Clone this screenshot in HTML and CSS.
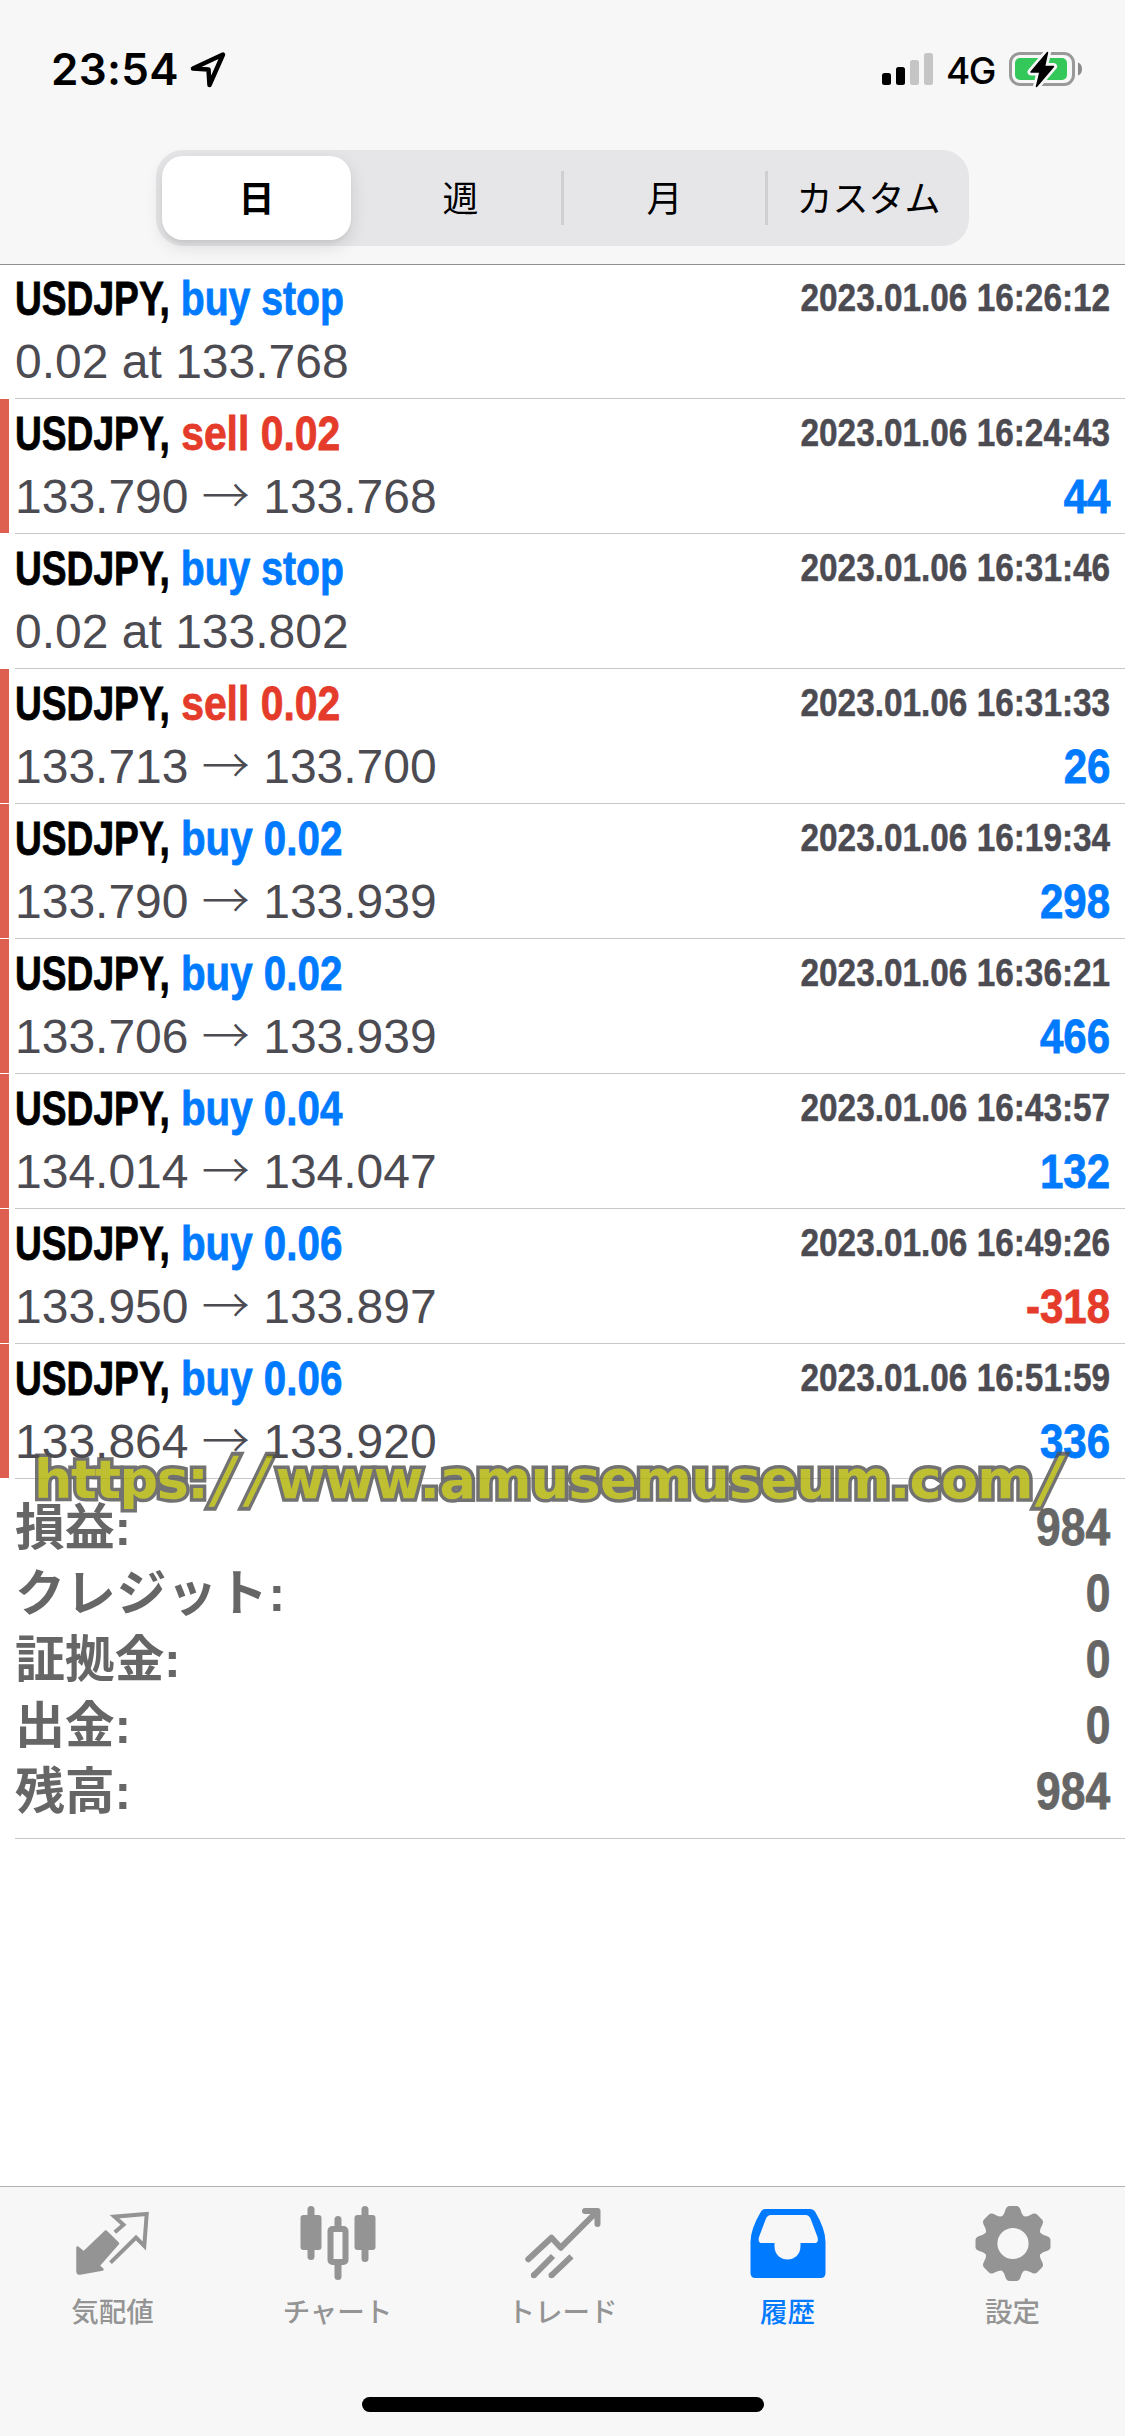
FILE: index.html
```html
<!DOCTYPE html>
<html lang="ja">
<head>
<meta charset="utf-8">
<title>履歴</title>
<link rel="stylesheet" href="styles.css">
</head>
<body>
<div class="screen">
  <header class="top">
    <div class="status">
      <span class="clock">23:54</span>
      <svg class="location" width="40" height="40" viewBox="0 0 40 40"><path d="M35 5.500 5 19.500 20.500 20.500 21.500 36Z" fill="none" stroke="#000" stroke-width="4.500" stroke-linejoin="round"/></svg>
      <svg class="signal" width="51" height="32" viewBox="0 0 51 32"><rect x="0" y="20" width="9" height="12" rx="2.500"/><rect x="14" y="14" width="9" height="18" rx="2.500"/><g fill="#c5c5c5"><rect x="28" y="7" width="9" height="25" rx="2.500"/><rect x="42" y="0" width="9" height="32" rx="2.500"/></g></svg>
      <span class="network">4G</span>
      <svg class="battery" width="74" height="40" viewBox="0 0 74 40"><rect x="1.500" y="4.500" width="63" height="31" rx="9.500" fill="none" stroke="#999" stroke-width="3"/><rect x="6" y="9" width="52" height="22" rx="5" fill="#34c759"/><path d="M69 13.500Q73 15 73 20T69 26.500Z" fill="#8a8a8a"/><path d="M38.500 3.500 22 23H31L27.500 37.500 44.500 17.500H35.500Z" fill="#000" stroke="#f7f7f7" stroke-width="7" stroke-linejoin="round" paint-order="stroke"/><path d="M38.500 3.500 22 23H31L27.500 37.500 44.500 17.500H35.500Z" stroke="#000" stroke-width="1.500" stroke-linejoin="round"/></svg>
    </div>
    <nav class="segments">
      <span class="segment selected">日</span>
      <span class="segment after-selected">週</span>
      <span class="segment divided">月</span>
      <span class="segment divided">カスタム</span>
    </nav>
  </header>

  <main class="content">
    <ul class="deals">
      <li class="deal"><i class="bar none"></i><div class="body"><div class="line"><b class="title">USDJPY,<span class="side buy order"> buy stop</span></b><b class="time">2023.01.06 16:26:12</b></div><div class="line"><span class="price">0.02 at 133.768</span></div></div></li>
      <li class="deal"><i class="bar"></i><div class="body"><div class="line"><b class="title">USDJPY,<span class="side sell"> sell 0.02</span></b><b class="time">2023.01.06 16:24:43</b></div><div class="line"><span class="price">133.790 <span class="arrow">→</span> 133.768</span><b class="profit">44</b></div></div></li>
      <li class="deal"><i class="bar none"></i><div class="body"><div class="line"><b class="title">USDJPY,<span class="side buy order"> buy stop</span></b><b class="time">2023.01.06 16:31:46</b></div><div class="line"><span class="price">0.02 at 133.802</span></div></div></li>
      <li class="deal"><i class="bar"></i><div class="body"><div class="line"><b class="title">USDJPY,<span class="side sell"> sell 0.02</span></b><b class="time">2023.01.06 16:31:33</b></div><div class="line"><span class="price">133.713 <span class="arrow">→</span> 133.700</span><b class="profit">26</b></div></div></li>
      <li class="deal"><i class="bar"></i><div class="body"><div class="line"><b class="title">USDJPY,<span class="side buy"> buy 0.02</span></b><b class="time">2023.01.06 16:19:34</b></div><div class="line"><span class="price">133.790 <span class="arrow">→</span> 133.939</span><b class="profit">298</b></div></div></li>
      <li class="deal"><i class="bar"></i><div class="body"><div class="line"><b class="title">USDJPY,<span class="side buy"> buy 0.02</span></b><b class="time">2023.01.06 16:36:21</b></div><div class="line"><span class="price">133.706 <span class="arrow">→</span> 133.939</span><b class="profit">466</b></div></div></li>
      <li class="deal"><i class="bar"></i><div class="body"><div class="line"><b class="title">USDJPY,<span class="side buy"> buy 0.04</span></b><b class="time">2023.01.06 16:43:57</b></div><div class="line"><span class="price">134.014 <span class="arrow">→</span> 134.047</span><b class="profit">132</b></div></div></li>
      <li class="deal"><i class="bar"></i><div class="body"><div class="line"><b class="title">USDJPY,<span class="side buy"> buy 0.06</span></b><b class="time">2023.01.06 16:49:26</b></div><div class="line"><span class="price">133.950 <span class="arrow">→</span> 133.897</span><b class="profit loss">-318</b></div></div></li>
      <li class="deal"><i class="bar"></i><div class="body"><div class="line"><b class="title">USDJPY,<span class="side buy"> buy 0.06</span></b><b class="time">2023.01.06 16:51:59</b></div><div class="line"><span class="price">133.864 <span class="arrow">→</span> 133.920</span><b class="profit">336</b></div></div></li>
    </ul>
    <dl class="summary">
      <div class="total"><dt>損益:</dt><dd>984</dd></div>
      <div class="total"><dt class="kana">クレジット:</dt><dd>0</dd></div>
      <div class="total"><dt>証拠金:</dt><dd>0</dd></div>
      <div class="total"><dt>出金:</dt><dd>0</dd></div>
      <div class="total"><dt>残高:</dt><dd>984</dd></div>
    </dl>
    <div class="watermark"><span class="scheme">https:</span><span class="slash">/</span><span class="slash">/</span><span class="host">www.amusemuseum.com</span><span class="slash">/</span></div>
  </main>

  <footer class="bottom">
    <nav class="tabs">
      <a class="tab">
        <svg width="90" height="78" viewBox="0 0 90 78"><path d="M9.500 43.500 15.800 48.500 37.800 27.500 50 39.500 30.500 61.700 34.500 65.500 12 69.500Q9.500 69.800 9.500 67Z" fill="currentColor" stroke="currentColor" stroke-width="2.500" stroke-linejoin="round"/><path d="M46.800 28.300 55.500 20.700 46.500 12.700 78.700 10 76.300 42 68 33.500 42.500 58.700" fill="none" stroke="currentColor" stroke-width="4"/></svg>
        <span>気配値</span>
      </a>
      <a class="tab">
        <svg width="90" height="78" viewBox="0 0 90 78" fill="currentColor"><rect x="7.500" y="11" width="21" height="35" rx="3"/><rect x="14.500" y="2" width="7" height="54" rx="3.500"/><rect x="41.500" y="12" width="7" height="15" rx="3.500"/><rect x="41.500" y="56" width="7" height="20" rx="3.500"/><rect x="37.500" y="25" width="15" height="33" rx="2" fill="none" stroke="currentColor" stroke-width="6"/><rect x="61.500" y="11" width="21" height="35" rx="3"/><rect x="68.500" y="2" width="7" height="56" rx="3.500"/></svg>
        <span>チャート</span>
      </a>
      <a class="tab">
        <svg width="90" height="78" viewBox="0 0 90 78" fill="none" stroke="currentColor" stroke-width="6" stroke-linejoin="round"><path d="M10.300 55.300 33.500 33.700 42.800 43.700 78 8.500M67 7H79.500V20" stroke-linecap="round"/><path d="M15.800 71.300 35 52M33.500 71.300 53.500 52.300"/><path d="M15.800 71.300h.01M33.500 71.300h.01" stroke-linecap="round"/></svg>
        <span>トレード</span>
      </a>
      <a class="tab active">
        <svg width="90" height="78" viewBox="0 0 90 78"><path fill="currentColor" fill-rule="evenodd" d="M22.500 5H67.500Q70.500 5 72 7.500Q82.500 25 82.500 38V69Q82.500 74 77.500 74H12.500Q7.500 74 7.500 69V38Q7.500 25 18 7.500Q19.500 5 22.500 5ZM28 11Q24.500 11 23 14.500L16 33Q14.500 39 19 39H31.500V42C31.500 60 57.500 60 57.500 42V39H71.500Q76 39 74.500 33L67.500 14.500Q66 11 62.500 11Z"/></svg>
        <span>履歴</span>
      </a>
      <a class="tab">
        <svg width="90" height="78" viewBox="0 0 90 78"><g transform="translate(45 39.500)"><circle r="22.300" fill="none" stroke="currentColor" stroke-width="13.400"/><g fill="currentColor"><path id="tooth" d="M-13 -25.500Q-9 -28-7.800 -33Q-6.500 -37.500-3.500 -37.500H3.500Q6.500 -37.500 7.800 -33Q9 -28 13 -25.500L9 -22H-9Z"/><use href="#tooth" transform="rotate(45)"/><use href="#tooth" transform="rotate(90)"/><use href="#tooth" transform="rotate(135)"/><use href="#tooth" transform="rotate(180)"/><use href="#tooth" transform="rotate(225)"/><use href="#tooth" transform="rotate(270)"/><use href="#tooth" transform="rotate(315)"/></g></g></svg>
        <span>設定</span>
      </a>
    </nav>
    <div class="home"></div>
  </footer>
</div>
</body>
</html>
```
FILE: styles.css
```css
* { box-sizing: border-box; }

body {
  margin: 0;
  background: #fff;
  font-family: "Liberation Sans", "Noto Sans CJK JP", sans-serif;
}

.screen {
  display: flex;
  flex-direction: column;
  width: 1125px;
  height: 2436px;
}

/* header */
.top {
  height: 265px;
  background: #f7f7f7;
  border-bottom: 1px solid #8f8f8f;
}

.status {
  display: flex;
  align-items: center;
  height: 138px;
  padding: 0 42px 0 51px;
}

.clock {
  width: 137px;
  font: 600 44px/60px Inter, sans-serif;
  letter-spacing: 0.3px;
}

.location { margin-right: auto; }
.signal { margin-right: 13px; }

.network {
  width: 63px;
  padding-top: 3px;
  font: 500 37px/60px Inter, sans-serif;
  letter-spacing: -1.5px;
}

.segments {
  display: grid;
  grid-template-columns: 195px 210px 204px 204px;
  width: 813px;
  height: 96px;
  margin: 12px 0 0 156px;
  border-radius: 27px;
  background: #e6e6e8;
}

.segment {
  display: flex;
  align-items: center;
  justify-content: center;
  padding-bottom: 4px;
  font: 400 36px/50px "Noto Sans CJK JP", sans-serif;
}

.after-selected { padding-left: 9px; }

.divided {
  padding-left: 3px;
  background: linear-gradient(#cfcfd1, #cfcfd1) 0 50% / 3px 54px no-repeat;
}

.selected {
  margin: 6px 0 6px 6px;
  border-radius: 21px;
  background: #fff;
  box-shadow: 0 6px 18px rgba(0, 0, 0, 0.12), 0 3px 3px rgba(0, 0, 0, 0.04);
  font-weight: 700;
}

/* deal list */
.content {
  position: relative;
  flex: 1;
}

.deals {
  margin: 0;
  padding: 0;
  list-style: none;
}

.deal {
  display: grid;
  grid-template-columns: 9px 1fr;
  column-gap: 6px;
  height: 135px;
}

.deal:first-child { height: 134px; }
.deal:first-child .body { padding-top: 6px; }

.bar {
  height: 134px;
  background: #de5e50;
}

.bar.none { background: none; }

.body {
  display: flex;
  flex-direction: column;
  gap: 7px;
  padding: 7px 15px 0 0;
  border-bottom: 1px solid #c8c8ca;
}

.line {
  display: flex;
  justify-content: space-between;
  height: 56px;
  line-height: 56px;
  font-size: 48px;
  white-space: pre;
}

.title {
  -webkit-text-stroke: 0.8px;
  transform: scaleX(0.774);
  transform-origin: left;
}

.side {
  display: inline-block;
  transform: scaleX(1.085);
  transform-origin: left;
}

.side.order { transform: scaleX(1.055); }
.buy { color: #007aff; }
.sell { color: #e53b2b; transform: scaleX(1.1); }

.time {
  margin-top: -1px;
  color: #4c4b52;
  font-size: 39px;
  -webkit-text-stroke: 0.5px;
  transform: scaleX(0.855);
  transform-origin: right;
}

.price { color: #4c4b52; }

.arrow {
  font-family: "Noto Sans CJK JP", sans-serif;
  font-weight: 300;
  line-height: 0;
}

.profit {
  color: #007aff;
  -webkit-text-stroke: 0.8px;
  transform: scaleX(0.875);
  transform-origin: right;
}

.loss { color: #e53b2b; }

/* totals */
.summary {
  height: 360px;
  margin: 0 0 0 15px;
  padding: 16px 15px 0 0;
  border-bottom: 1px solid #c8c8ca;
  color: #666;
  font-size: 51px;
  font-weight: 700;
}

.total {
  display: flex;
  justify-content: space-between;
  height: 66px;
  line-height: 66px;
}

.total dt {
  font-size: 50px;
  letter-spacing: -0.3px;
}

.total .kana { letter-spacing: 0.7px; }

.total dd {
  margin: 0;
  -webkit-text-stroke: 0.8px;
  transform: scaleX(0.87);
  transform-origin: right;
}

/* address stamped over the list */
.watermark {
  position: absolute;
  left: 34px;
  top: 1183px;
  color: #b0b000;
  font: 700 54px/64px "DejaVu Sans", sans-serif;
  -webkit-text-stroke: 7px #505050;
  paint-order: stroke fill;
  opacity: 0.8;
  white-space: nowrap;
}

.scheme { letter-spacing: -1.5px; }
.host { letter-spacing: -0.7px; }

.slash {
  display: inline-block;
  width: 34px;
  text-align: center;
  transform: skewX(-12deg) scaleY(1.15);
}

/* tab bar */
.bottom {
  height: 250px;
  background: #f7f7f7;
  border-top: 1px solid #b2b2b2;
}

.tabs {
  display: grid;
  grid-template-columns: repeat(5, 225px);
  height: 210px;
  padding-top: 17px;
}

.tab {
  display: flex;
  flex-direction: column;
  align-items: center;
  gap: 8px;
  color: #949494;
  font: 500 27.500px/40px "Noto Sans CJK JP", sans-serif;
}

.active { color: #007aff; }

.home {
  width: 402px;
  height: 15px;
  margin: 0 auto;
  border-radius: 8px;
  background: #000;
}
```
